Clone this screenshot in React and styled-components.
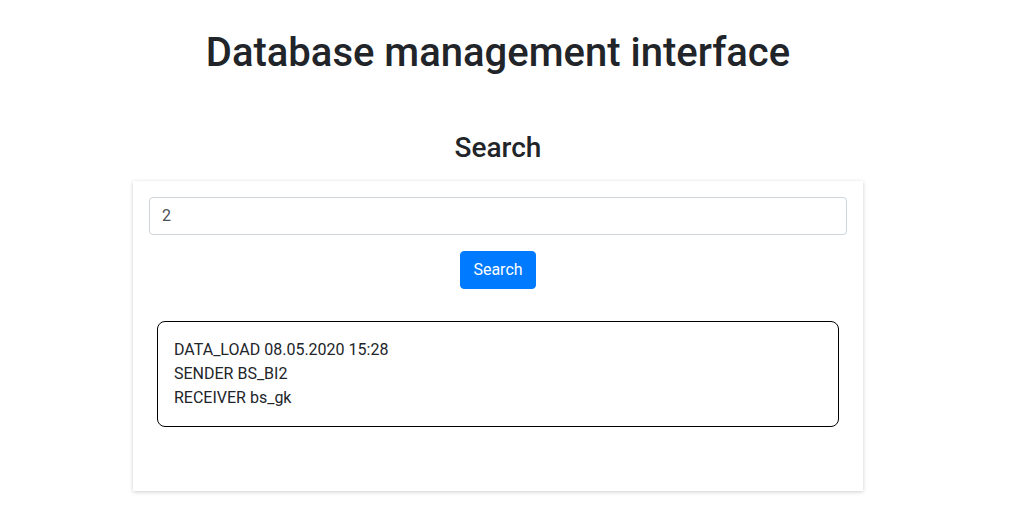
import React from 'react'
import styled, { createGlobalStyle } from 'styled-components'

const GlobalStyle = createGlobalStyle`
body {
  margin: 0;
  background: #fff;
  font-family: Roboto, "Liberation Sans", sans-serif;
  color: #212529;
}
`;

const Page = styled.div`
width: 996px;
padding-bottom: 30px;
display: flex;
flex-direction: column;
align-items: center;
`;

const Title = styled.h1`
margin: 29px 0 0;
font-size: 40px;
font-weight: 500;
line-height: 48px;
`;

const SubTitle = styled.h2`
margin: 54px 0 16px;
font-size: 28px;
font-weight: 500;
line-height: 33.6px;
`;

const Card = styled.div`
box-sizing: border-box;
width: 730px;
padding: 16px 16px 64px;
background: #fff;
box-shadow: 0 1px 4px rgba(0, 0, 0, 0.2);
display: flex;
flex-direction: column;
align-items: center;
`;

const Input = styled.input`
box-sizing: border-box;
width: 100%;
height: 38px;
padding: 6px 12px;
border: 1px solid #ced4da;
border-radius: 4px;
font-family: inherit;
font-size: 16px;
color: #495057;
outline: none;
`;

const Button = styled.button`
margin-top: 16px;
height: 38px;
padding: 6px 12px;
border: 1px solid #007bff;
border-radius: 4px;
background: #007bff;
color: #fff;
font-family: inherit;
font-size: 16px;
line-height: 24px;
`;

const Result = styled.div`
box-sizing: border-box;
align-self: stretch;
margin: 32px 8px 0;
padding: 16px;
border: 1px solid #000;
border-radius: 8px;
font-size: 16px;
line-height: 24px;
`;

const Line = styled.div``;

const App = () => {
  return (
    <Page>
      <GlobalStyle />
      <Title>Database management interface</Title>
      <SubTitle>Search</SubTitle>
      <Card>
        <Input defaultValue="2" />
        <Button>Search</Button>
        <Result>
          <Line>DATA_LOAD 08.05.2020 15:28</Line>
          <Line>SENDER BS_BI2</Line>
          <Line>RECEIVER bs_gk</Line>
        </Result>
      </Card>
    </Page>
  )
}

export default App
